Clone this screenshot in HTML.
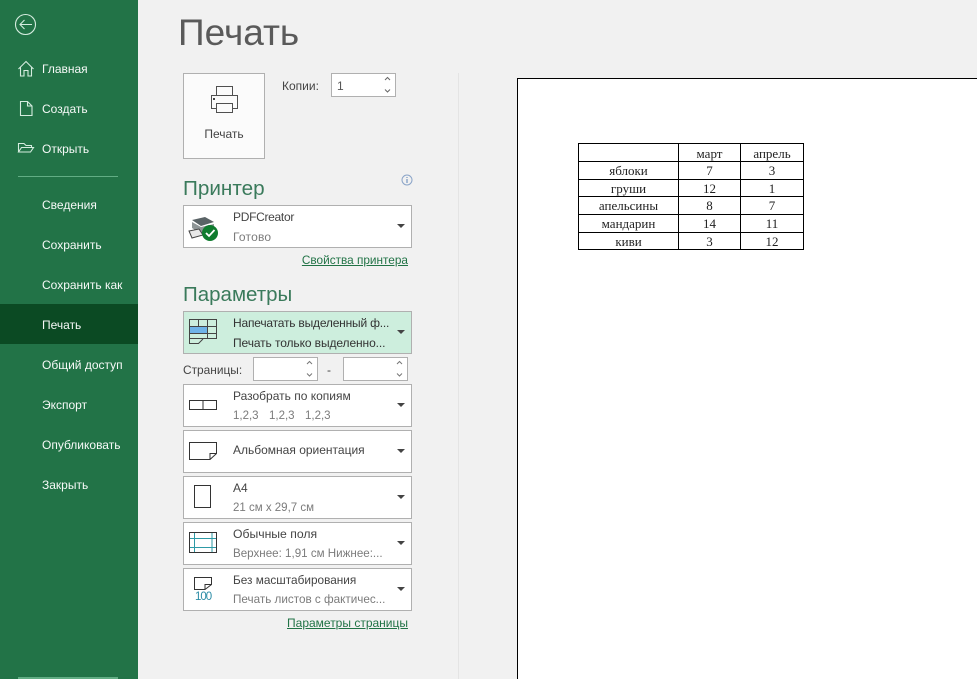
<!DOCTYPE html>
<html style="overflow:hidden"><head><meta charset="utf-8"><style>
html,body{margin:0;padding:0;width:977px;height:679px;overflow:hidden}
#w{position:absolute;left:0;top:0;width:977px;height:679px;overflow:hidden;background:#f1f1f1;font-family:"Liberation Sans",sans-serif;font-size:12px;color:#444}
.a,.s,.b,.t,.p,.ln{position:absolute}
.s{left:42px;color:#fff;white-space:nowrap;font-size:12px;line-height:16px;opacity:.96}
.b{left:183px;width:227px;height:41px;border:1px solid #b0b0b0;background:#fff}
.t{white-space:nowrap;line-height:16px;left:233px;color:#444}
.g{color:#7b7b7b}
.arr{position:absolute;left:397px;width:0;height:0;border-left:4px solid transparent;border-right:4px solid transparent;border-top:4px solid #444}
.h{position:absolute;left:183px;font-size:20.7px;line-height:26px;color:#3a7a5b;white-space:nowrap}
.sp{position:absolute;background:#fff;border:1px solid #b0b0b0;box-sizing:border-box}
svg{position:absolute;overflow:visible}
.cell{position:absolute;text-align:center;font-family:"Liberation Serif",serif;font-size:13px;line-height:16px;color:#222;white-space:nowrap}
.ln{background:#000}
.lk{position:absolute;color:#217346;text-decoration:underline;white-space:nowrap;line-height:16px;right:569px}
</style></head><body><div id="w">
<div class="a" style="left:0;top:0;width:138px;height:679px;background:#227347"></div>
<div class="a" style="left:0;top:304px;width:138px;height:40px;background:#0b4a23"></div>
<div class="a" style="left:18px;top:176px;width:100px;height:1px;background:#62ad84"></div>
<div class="a" style="left:18px;top:677px;width:100px;height:2px;background:#62ad84"></div>

<svg style="left:0;top:0" width="138" height="170" fill="none" stroke="#d5ecdf" stroke-width="1.1">
<circle cx="25.500" cy="24.500" r="10"/><path d="M20 24.500H32M24.500 20L20 24.500L24.500 29"/>
<path d="M18.500 69L26 61.500L33.500 69M20.500 67.500V76H24V70.500H28V76H31.500V67.500"/>
<path d="M20.500 101.500H27.500L32 106V115.500H20.500ZM27.500 101.500V106H32"/>
<path d="M18.500 152V143.500H24L26 145.500H31.500V147.500M18.500 152L21.500 147.500H33.500L30.500 152Z"/>
</svg>
<div class="s" style="top:61px">Главная</div>
<div class="s" style="top:101px">Создать</div>
<div class="s" style="top:141px">Открыть</div>
<div class="s" style="top:197px">Сведения</div>
<div class="s" style="top:237px">Сохранить</div>
<div class="s" style="top:277px">Сохранить как</div>
<div class="s" style="top:317px">Печать</div>
<div class="s" style="top:357px">Общий доступ</div>
<div class="s" style="top:397px">Экспорт</div>
<div class="s" style="top:437px">Опубликовать</div>
<div class="s" style="top:477px">Закрыть</div>

<div class="a" style="left:178px;top:11px;font-size:37px;line-height:44px;color:#5a5a5a;white-space:nowrap">Печать</div>

<div class="a" style="left:183px;top:73px;width:80px;height:84px;border:1px solid #b0b0b0;background:#fbfbfb"></div>
<svg style="left:205px;top:84px" width="40" height="32" fill="none" stroke="#505050" stroke-width="1">
<path d="M11.500 2.500H27.500V11.500H11.500ZM11.500 24.500H6.500V11.500H32.500V24.500H27.500M11.500 19.500H27.500V28.500H11.500Z"/><rect x="8" y="14" width="2" height="2" fill="#444" stroke="none"/></svg>
<div class="a" style="left:183px;top:126px;width:82px;text-align:center;line-height:16px;color:#444">Печать</div>

<div class="a" style="left:282px;top:78px;line-height:16px">Копии:</div>
<div class="sp" style="left:331px;top:73px;width:65px;height:24px"></div>
<div class="a" style="left:337px;top:78px;line-height:16px;color:#555">1</div>
<svg style="left:383px;top:75px" width="10" height="20" fill="none" stroke="#666" stroke-width="1"><path d="M2 5L4.500 2.500L7 5M2 14.500L4.500 17L7 14.500"/></svg>

<div class="h" style="top:176px">Принтер</div>
<svg style="left:401px;top:174px" width="12" height="12" fill="none"><circle cx="6" cy="6" r="5" stroke="#8aa4c8"/><path d="M6 5V9M6 3V4" stroke="#5c84b8"/></svg>
<div class="b" style="top:205px"></div>
<svg style="left:188px;top:216px" width="32" height="28">
<path d="M4 4L17 1L26 6L13 10Z" fill="#5a6366"/><path d="M4 6L13 11L26 8V13L12 17L4 12Z" fill="#8e9596"/><path d="M1 15L11 13L15 19L4 22Z" fill="#e8e8e8" stroke="#444" stroke-width="1"/>
<circle cx="22" cy="17" r="8" fill="#107c2f"/><path d="M18 17L21 20L26.500 14" fill="none" stroke="#fff" stroke-width="1.800"/></svg>
<div class="t" style="top:209px;letter-spacing:-.3px">PDFCreator</div>
<div class="t g" style="top:229px;letter-spacing:.2px">Готово</div>
<div class="arr" style="top:224px"></div>
<div class="lk" style="top:252px;font-size:11.800px">Свойства принтера</div>

<div class="h" style="top:282px;font-size:20.500px">Параметры</div>
<div class="b" style="top:311px;background:#cdeedd"></div>
<svg style="left:189px;top:319px" width="30" height="26" fill="none" stroke="#444" stroke-width="1">
<rect x="0.500" y="8" width="18" height="6" fill="#6fb3e8" stroke="none"/>
<path d="M0.500 0.500H27.500V19.500H0.500ZM0.500 7.500H27.500M0.500 14.500H27.500M9.500 0.500V7.500M18.500 0.500V19.500M0.500 19.500V24.500H9.500L14 20"/></svg>
<div class="t" style="top:315px;color:#333;letter-spacing:-.2px">Напечатать выделенный ф...</div>
<div class="t" style="top:335px;color:#333;letter-spacing:-.1px">Печать только выделенно...</div>
<div class="arr" style="top:330px"></div>

<div class="a" style="left:183px;top:362px;line-height:16px;font-size:11.900px">Страницы:</div>
<div class="sp" style="left:253px;top:357px;width:65px;height:24px"></div>
<div class="sp" style="left:343px;top:357px;width:65px;height:24px"></div>
<div class="a" style="left:327px;top:362px;line-height:16px">-</div>
<svg style="left:305px;top:359px" width="10" height="20" fill="none" stroke="#777"><path d="M2 5L4.500 2.500L7 5M2 14.500L4.500 17L7 14.500"/></svg>
<svg style="left:395px;top:359px" width="10" height="20" fill="none" stroke="#777"><path d="M2 5L4.500 2.500L7 5M2 14.500L4.500 17L7 14.500"/></svg>

<div class="b" style="top:384px"></div>
<svg style="left:189px;top:398px" width="30" height="16" fill="none" stroke="#333"><path d="M0.500 2.500H27.500V11.500H0.500ZM14 2.500V11.500" stroke-width="1"/></svg>
<div class="t" style="top:388px">Разобрать по копиям</div>
<div class="t g" style="top:408px;font-size:11.500px">1,2,3</div>
<div class="t g" style="top:408px;left:269px;font-size:11.500px">1,2,3</div>
<div class="t g" style="top:408px;left:305px;font-size:11.500px">1,2,3</div>
<div class="arr" style="top:403px"></div>

<div class="b" style="top:430px"></div>
<svg style="left:189px;top:441px" width="30" height="22" fill="none" stroke="#333"><path d="M0.500 1.500H27.500V12.500L21 18.500H0.500ZM27.500 12.500H21V18.500"/></svg>
<div class="t" style="top:442px">Альбомная ориентация</div>
<div class="arr" style="top:449px"></div>

<div class="b" style="top:476px"></div>
<svg style="left:194px;top:484px" width="20" height="26" fill="none" stroke="#333"><rect x="0.500" y="1.500" width="16" height="22"/></svg>
<div class="t" style="top:480px">A4</div>
<div class="t g" style="top:500px;font-size:11.500px">21 см x 29,7 см</div>
<div class="arr" style="top:495px"></div>

<div class="b" style="top:522px"></div>
<svg style="left:189px;top:530px" width="30" height="26" fill="none"><path d="M5.500 2.500V22.500M23 2.500V22.500M0.500 8.500H27.500M0.500 17.500H27.500" stroke="#2e9aa6"/><rect x="0.500" y="2.500" width="27" height="20" stroke="#333"/></svg>
<div class="t" style="top:526px;font-size:12.200px">Обычные поля</div>
<div class="t g" style="top:546px;font-size:11.600px">Верхнее: 1,91 см Нижнее:...</div>
<div class="arr" style="top:541px"></div>

<div class="b" style="top:568px"></div>
<svg style="left:194px;top:577px" width="22" height="16" fill="none" stroke="#333"><path d="M0.500 0.500H17.500V7.500L11 12.500H0.500ZM17.500 7.500H11V12.500"/></svg>
<div class="a" style="left:195px;top:590px;font-size:11.500px;line-height:14px;color:#2b8ca6;letter-spacing:-1px">100</div>
<div class="t" style="top:572px;font-size:11.800px">Без масштабирования</div>
<div class="t g" style="top:592px;font-size:11.700px">Печать листов с фактичес...</div>
<div class="arr" style="top:587px"></div>
<div class="lk" style="top:615px">Параметры страницы</div>

<div class="a" style="left:458px;top:73px;width:1px;height:606px;background:#e4e4e4"></div>
<div class="a" style="left:517px;top:78px;width:470px;height:610px;border:1px solid #000;background:#fff"></div>

<div class="ln" style="left:578px;top:143px;width:226px;height:1px"></div>
<div class="ln" style="left:578px;top:161px;width:226px;height:1px"></div>
<div class="ln" style="left:578px;top:179px;width:226px;height:1px"></div>
<div class="ln" style="left:578px;top:196px;width:226px;height:1px"></div>
<div class="ln" style="left:578px;top:214px;width:226px;height:1px"></div>
<div class="ln" style="left:578px;top:232px;width:226px;height:1px"></div>
<div class="ln" style="left:578px;top:249px;width:226px;height:1px"></div>
<div class="ln" style="left:578px;top:143px;width:1px;height:107px"></div>
<div class="ln" style="left:678px;top:143px;width:1px;height:107px"></div>
<div class="ln" style="left:740px;top:143px;width:1px;height:107px"></div>
<div class="ln" style="left:803px;top:143px;width:1px;height:107px"></div>

<div class="cell" style="left:679px;top:146px;width:61px">март</div><div class="cell" style="left:741px;top:146px;width:62px">апрель</div>
<div class="cell" style="left:579px;top:163px;width:99px">яблоки</div><div class="cell" style="left:679px;top:163px;width:61px">7</div><div class="cell" style="left:741px;top:163px;width:62px">3</div>
<div class="cell" style="left:579px;top:181px;width:99px">груши</div><div class="cell" style="left:679px;top:181px;width:61px">12</div><div class="cell" style="left:741px;top:181px;width:62px">1</div>
<div class="cell" style="left:579px;top:198px;width:99px">апельсины</div><div class="cell" style="left:679px;top:198px;width:61px">8</div><div class="cell" style="left:741px;top:198px;width:62px">7</div>
<div class="cell" style="left:579px;top:216px;width:99px">мандарин</div><div class="cell" style="left:679px;top:216px;width:61px">14</div><div class="cell" style="left:741px;top:216px;width:62px">11</div>
<div class="cell" style="left:579px;top:234px;width:99px">киви</div><div class="cell" style="left:679px;top:234px;width:61px">3</div><div class="cell" style="left:741px;top:234px;width:62px">12</div>
</div></body></html>
